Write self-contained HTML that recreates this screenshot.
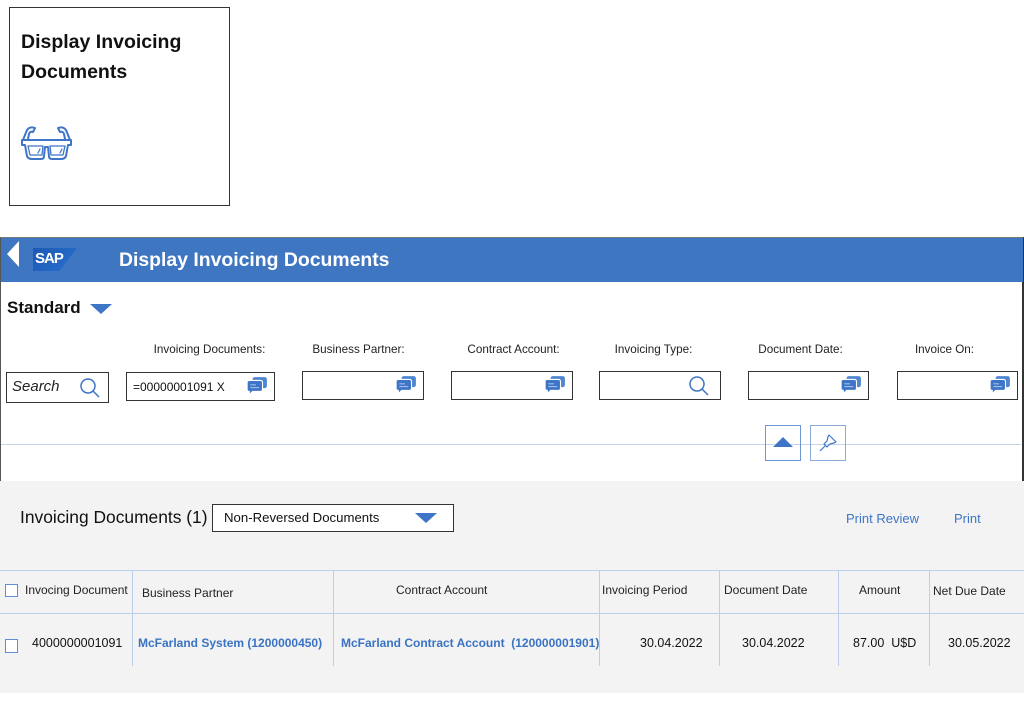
<!DOCTYPE html>
<html><head><meta charset="utf-8"><style>
*{margin:0;padding:0;box-sizing:border-box}
body{width:1024px;height:709px;position:relative;background:#fff;font-family:"Liberation Sans",sans-serif;color:#111;overflow:hidden}
.a{position:absolute}
.lbl{font-size:11.7px;color:#222;text-align:center;width:131px}
.in{position:absolute;height:29px;width:122px;border:1px solid #333;background:#fff;top:371px}
.chat{position:absolute;right:6px;top:3px}
.th{font-size:12px;color:#222}
.td{font-size:12.5px;color:#111}
.lk{font-size:12px;color:#3a73c4;font-weight:bold}
.vl{position:absolute;width:1px;background:#b9cfec;top:570px;height:96px}
</style></head><body>
<div class="a" style="left:9px;top:7px;width:221px;height:199px;border:1px solid #333"></div>
<div class="a" style="left:21px;top:27px;font-size:19.5px;font-weight:bold;line-height:30px">Display Invoicing<br>Documents</div>
<svg class="a" style="left:20px;top:124px" width="53" height="38" viewBox="0 0 53 38" fill="none" stroke="#3e75c6" stroke-width="2" stroke-linejoin="round" stroke-linecap="round">
<path d="M3 16 L7 6 Q10 2 15 4 L13 8 Q10 7 9 10 L8 15"/><path d="M50 16 L46 6 Q43 2 38 4 L40 8 Q43 7 44 10 L45 15"/>
<path d="M2 16 H51 V21 H48 L46 32 Q45 35 41 35 H32 Q29 35 29 32 L28 23 H25 L24 32 Q24 35 21 35 H12 Q8 35 7 32 L5 21 H2 Z"/>
<path d="M8 22 H23 L22 31 H10 Z M30 22 H45 L43 31 H31 Z" stroke-width="1.3"/>
<path d="M18 29 L20 25 M40 29 L42 25" stroke-width="1.2"/></svg>

<div class="a" style="left:0;top:237px;width:1024px;height:244px;border:1px solid #555;border-top:1px solid #777;border-bottom:none;border-right:2px solid #333"></div>
<div class="a" style="left:1px;top:238px;width:1022px;height:44px;background:#3f76c1"></div>
<div class="a" style="left:7px;top:241px;width:0;height:0;border-top:13px solid transparent;border-bottom:13px solid transparent;border-right:12px solid #fff"></div>
<div class="a" style="left:33px;top:248px;width:44px;height:23px;background:linear-gradient(135deg,#1b5ab3 0,#2a6fd0 100%);clip-path:polygon(0 0,100% 0,60% 100%,0 100%)"></div>
<div class="a" style="left:35px;top:250px;color:#fff;font-weight:bold;font-size:15px;letter-spacing:-1px">SAP</div>
<div class="a" style="left:119px;top:249px;color:#fff;font-weight:bold;font-size:19.4px">Display Invoicing Documents</div>

<div class="a" style="left:7px;top:298px;font-size:17px;font-weight:bold">Standard</div>
<div class="a" style="left:90px;top:304px;border-left:11px solid transparent;border-right:11px solid transparent;border-top:10px solid #3e75c6"></div>

<div class="a lbl" style="left:144px;top:343px">Invoicing Documents:</div>
<div class="a lbl" style="left:293px;top:343px">Business Partner:</div>
<div class="a lbl" style="left:448px;top:343px">Contract Account:</div>
<div class="a lbl" style="left:588px;top:343px">Invoicing Type:</div>
<div class="a lbl" style="left:735px;top:343px">Document Date:</div>
<div class="a lbl" style="left:879px;top:343px">Invoice On:</div>

<div class="in" style="left:6px;top:372px;width:103px;height:31px"><span class="a" style="left:5px;top:5px;font-size:15px;font-style:italic;color:#222">Search</span>
<svg class="a" style="left:72px;top:4px" width="22" height="22" fill="none" stroke="#3e75c6" stroke-width="1.5"><circle cx="9" cy="9" r="7"/><path d="M14 14 L20 20"/></svg></div>

<div class="in" style="left:126px;width:149px;top:372px"><span class="a" style="left:6px;top:7px;font-size:12px">=00000001091 X</span><svg class="chat" width="22" height="21" viewBox="0 0 20 19"><rect x="6" y="1" width="13" height="10" rx="2" fill="#4f86cf"/><path d="M1 6 Q1 4 3 4 H13 Q15 4 15 6 V12 Q15 14 13 14 H6 L3 17 V14 Q1 14 1 12 Z" fill="#3e75c6" stroke="#fff" stroke-width="1"/><path d="M4 8 H9 M4 10.5 H12" stroke="#9fbde6" stroke-width="1"/></svg></div>
<div class="in" style="left:302px"><svg class="chat" width="22" height="21" viewBox="0 0 20 19"><rect x="6" y="1" width="13" height="10" rx="2" fill="#4f86cf"/><path d="M1 6 Q1 4 3 4 H13 Q15 4 15 6 V12 Q15 14 13 14 H6 L3 17 V14 Q1 14 1 12 Z" fill="#3e75c6" stroke="#fff" stroke-width="1"/><path d="M4 8 H9 M4 10.5 H12" stroke="#9fbde6" stroke-width="1"/></svg></div>
<div class="in" style="left:451px"><svg class="chat" width="22" height="21" viewBox="0 0 20 19"><rect x="6" y="1" width="13" height="10" rx="2" fill="#4f86cf"/><path d="M1 6 Q1 4 3 4 H13 Q15 4 15 6 V12 Q15 14 13 14 H6 L3 17 V14 Q1 14 1 12 Z" fill="#3e75c6" stroke="#fff" stroke-width="1"/><path d="M4 8 H9 M4 10.5 H12" stroke="#9fbde6" stroke-width="1"/></svg></div>
<div class="in" style="left:599px"><svg class="a" style="left:88px;top:3px" width="22" height="22" fill="none" stroke="#3e75c6" stroke-width="1.5"><circle cx="9" cy="9" r="7"/><path d="M14 14 L20 20"/></svg></div>
<div class="in" style="left:748px;width:121px"><svg class="chat" width="22" height="21" viewBox="0 0 20 19"><rect x="6" y="1" width="13" height="10" rx="2" fill="#4f86cf"/><path d="M1 6 Q1 4 3 4 H13 Q15 4 15 6 V12 Q15 14 13 14 H6 L3 17 V14 Q1 14 1 12 Z" fill="#3e75c6" stroke="#fff" stroke-width="1"/><path d="M4 8 H9 M4 10.5 H12" stroke="#9fbde6" stroke-width="1"/></svg></div>
<div class="in" style="left:897px;width:121px"><svg class="chat" width="22" height="21" viewBox="0 0 20 19"><rect x="6" y="1" width="13" height="10" rx="2" fill="#4f86cf"/><path d="M1 6 Q1 4 3 4 H13 Q15 4 15 6 V12 Q15 14 13 14 H6 L3 17 V14 Q1 14 1 12 Z" fill="#3e75c6" stroke="#fff" stroke-width="1"/><path d="M4 8 H9 M4 10.5 H12" stroke="#9fbde6" stroke-width="1"/></svg></div>

<div class="a" style="left:1px;top:444px;width:1020px;height:1px;background:#c3d4ec"></div>
<div class="a" style="left:765px;top:425px;width:36px;height:36px;border:1px solid #6e97d2"></div>
<div class="a" style="left:773px;top:437px;border-left:10px solid transparent;border-right:10px solid transparent;border-bottom:10px solid #3e75c6"></div>
<div class="a" style="left:810px;top:425px;width:36px;height:36px;border:1px solid #8aaad8"></div>
<svg class="a" style="left:818px;top:433px" width="20" height="20" fill="none" stroke="#3e75c6" stroke-width="1.2" stroke-linejoin="round"><path d="M11 2 L18 9 L16 10 L12 11 L9 14 L6 11 L9 8 L10 4 Z M7 13 L2 18"/></svg>

<div class="a" style="left:0;top:481px;width:1024px;height:212px;background:#f3f3f3"></div>
<div class="a" style="left:20px;top:507px;font-size:17.4px;color:#111">Invoicing Documents (1)</div>
<div class="a" style="left:212px;top:504px;width:242px;height:28px;border:1px solid #333;background:#fff"></div>
<div class="a" style="left:224px;top:510px;font-size:13.2px">Non-Reversed Documents</div>
<div class="a" style="left:415px;top:513px;border-left:11px solid transparent;border-right:11px solid transparent;border-top:10px solid #3e75c6"></div>
<div class="a" style="left:846px;top:511px;font-size:13px;color:#3e75c6">Print Review</div>
<div class="a" style="left:954px;top:511px;font-size:13px;color:#3e75c6">Print</div>

<div class="a" style="left:0;top:570px;width:1024px;height:1px;background:#b9cfec"></div>
<div class="a" style="left:0;top:613px;width:1024px;height:1px;background:#b9cfec"></div>
<div class="vl" style="left:132px"></div><div class="vl" style="left:333px"></div><div class="vl" style="left:599px"></div><div class="vl" style="left:719px"></div><div class="vl" style="left:838px"></div><div class="vl" style="left:929px"></div>

<div class="a" style="left:5px;top:584px;width:13px;height:13px;border:1px solid #5f8fd0;background:#fff"></div>
<div class="a th" style="left:25px;top:583px">Invocing Document</div>
<div class="a th" style="left:142px;top:586px">Business Partner</div>
<div class="a th" style="left:396px;top:583px">Contract Account</div>
<div class="a th" style="left:602px;top:583px">Invoicing Period</div>
<div class="a th" style="left:724px;top:583px">Document Date</div>
<div class="a th" style="left:859px;top:583px">Amount</div>
<div class="a th" style="left:933px;top:584px">Net Due Date</div>

<div class="a" style="left:5px;top:639px;width:13px;height:14px;border:1px solid #5f8fd0;background:#fff"></div>
<div class="a td" style="left:32px;top:636px">4000000001091</div>
<div class="a lk" style="left:138px;top:636px">McFarland System (1200000450)</div>
<div class="a lk" style="left:341px;top:636px">McFarland Contract Account&nbsp; (120000001901)</div>
<div class="a td" style="left:640px;top:636px">30.04.2022</div>
<div class="a td" style="left:742px;top:636px">30.04.2022</div>
<div class="a td" style="left:853px;top:636px">87.00&nbsp; U$D</div>
<div class="a td" style="left:948px;top:636px">30.05.2022</div>
</body></html>
